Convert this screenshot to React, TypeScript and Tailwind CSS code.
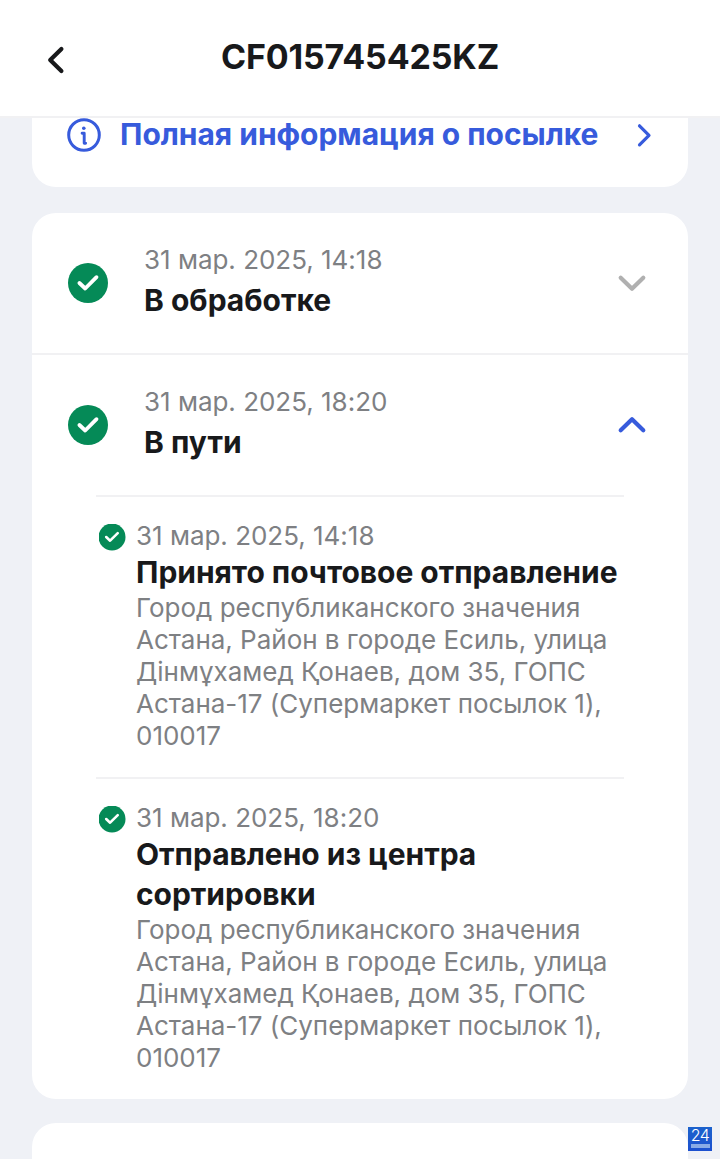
import React, { useState } from "react";

type TrackEvent = {
  date: string;
  title: string;
  address: string;
};

type Stage = {
  date: string;
  title: string;
  events: TrackEvent[];
};

const address =
  "Город республиканского значения Астана, Район в городе Есиль, улица Дінмұхамед Қонаев, дом 35, ГОПС Астана-17 (Супермаркет посылок 1), 010017";

const stages: Stage[] = [
  { date: "31 мар. 2025, 14:18", title: "В обработке", events: [] },
  {
    date: "31 мар. 2025, 18:20",
    title: "В пути",
    events: [
      {
        date: "31 мар. 2025, 14:18",
        title: "Принято почтовое отправление",
        address,
      },
      {
        date: "31 мар. 2025, 18:20",
        title: "Отправлено из центра сортировки",
        address,
      },
    ],
  },
];

const CheckCircle = ({ className }: { className: string }) => (
  <svg className={className} viewBox="0 0 40 40" fill="none">
    <circle cx="20" cy="20" r="20" fill="#058a57" />
    <path
      d="M11.4 20L17.2 25.5L28.5 14.2"
      stroke="white"
      strokeWidth="3.8"
      strokeLinecap="round"
      strokeLinejoin="round"
    />
  </svg>
);

const Chevron = ({ open }: { open: boolean }) => (
  <svg className="h-10 w-10 shrink-0" viewBox="0 0 40 40" fill="none">
    <path
      d={open ? "M8.7 25.3L20 14.2L31.3 25.3" : "M8.7 14.7L20 25.8L31.3 14.7"}
      stroke={open ? "#375bdc" : "#b0b0b0"}
      strokeWidth="4.2"
      strokeLinecap="round"
      strokeLinejoin="round"
    />
  </svg>
);

const Header = () => (
  <header className="flex h-[118px] shrink-0 items-start border-b-2 border-[#f1f1f3] bg-white px-10 pt-9">
    <button className="mt-2 h-8 w-8">
      <svg className="h-8 w-8" viewBox="0 0 32 32" fill="none">
        <path
          d="M21.4 4.9L10.2 16L21.4 27.1"
          stroke="#18191b"
          strokeWidth="4.2"
          strokeLinecap="round"
          strokeLinejoin="round"
        />
      </svg>
    </button>
    <h1 className="flex-1 text-center text-[34px] leading-[42px] font-bold tracking-[-0.15px]">
      CF015745425KZ
    </h1>
    <div className="w-8" />
  </header>
);

const InfoLink = () => (
  <a
    href="#"
    className="flex h-[69px] shrink-0 items-start rounded-b-[24px] bg-white pr-6 pl-[35px] text-[#375bdc]"
  >
    <svg className="h-[34px] w-[34px] shrink-0" viewBox="0 0 34 34" fill="none">
      <circle cx="17" cy="17" r="15.3" stroke="currentColor" strokeWidth="3" />
      <circle cx="16.8" cy="10.3" r="1.8" fill="currentColor" />
      <path
        d="M15.1 15.2H17.2V25.2H18.6"
        stroke="currentColor"
        strokeWidth="2.9"
        strokeLinecap="round"
        strokeLinejoin="round"
      />
    </svg>
    <span className="ml-[19px] flex-1 text-[30px] leading-8 font-bold tracking-[-0.03px] whitespace-nowrap">
      Полная информация о посылке
    </span>
    <svg className="h-10 w-10 shrink-0" viewBox="0 0 40 40" fill="none">
      <path
        d="M15.5 7.8L25 17.3L15.5 26.8"
        stroke="currentColor"
        strokeWidth="3.2"
        strokeLinecap="round"
        strokeLinejoin="round"
      />
    </svg>
  </a>
);

const EventItem = ({ event }: { event: TrackEvent }) => (
  <li className="mx-16 border-t-2 border-[#f1f1f3] pt-[23px] pb-[25px]">
    <div className="flex">
      <div className="w-10 shrink-0 pt-[3px] pl-0.5">
        <CheckCircle className="h-7 w-7 p-[0.5px]" />
      </div>
      <div className="min-w-0">
        <p className="text-[26px] leading-8 tracking-[-0.02px] text-[#7e8083]">
          {event.date}
        </p>
        <h3 className="text-[30px] leading-10 font-bold tracking-[-0.03px]">
          {event.title}
        </h3>
        <p className="text-[26px] leading-8 tracking-[-0.02px] text-[#7e8083]">
          {event.address}
        </p>
      </div>
    </div>
  </li>
);

const StageBlock = ({ stage, first }: { stage: Stage; first: boolean }) => {
  const [open, setOpen] = useState(stage.events.length > 0);

  return (
    <section className={first ? "" : "border-t-2 border-[#f1f1f3]"}>
      <button
        className="flex h-[140px] w-full items-center pr-9 pl-9 text-left"
        onClick={() => setOpen(!open)}
      >
        <CheckCircle className="h-10 w-10 shrink-0" />
        <div className="ml-9 flex-1 pb-0.5">
          <p className="text-[26px] leading-8 tracking-[-0.02px] text-[#7e8083]">
            {stage.date}
          </p>
          <h2 className="mt-1 text-[30px] leading-10 font-bold">
            {stage.title}
          </h2>
        </div>
        <Chevron open={open} />
      </button>
      {open && (
        <ul>
          {stage.events.map((event, index) => (
            <EventItem key={index} event={event} />
          ))}
        </ul>
      )}
    </section>
  );
};

const App = () => {
  return (
    <div className="relative flex h-[1159px] w-[720px] flex-col overflow-hidden bg-[#eff1f6] font-['Inter',sans-serif] text-[#18191b]">
      <Header />
      <main className="flex flex-1 flex-col px-8">
        <InfoLink />
        <div className="mt-[26px] shrink-0 rounded-[24px] bg-white">
          {stages.map((stage, index) => (
            <StageBlock key={index} stage={stage} first={index === 0} />
          ))}
        </div>
        <div className="mt-6 flex-1 rounded-t-[24px] bg-white" />
      </main>

      {/* Corner badge */}
      <div className="absolute right-2 bottom-2 flex h-6 w-6 flex-col items-center bg-linear-to-b from-[#1c62cc] to-[#1d50cf]">
        <span className="font-['Inter',sans-serif] text-[16px] leading-[17px] font-light tracking-[-0.5px] text-white">
          24
        </span>
        <div className="h-1 w-[19px] bg-[#8aabe6]" />
      </div>
    </div>
  );
};

export default App;
